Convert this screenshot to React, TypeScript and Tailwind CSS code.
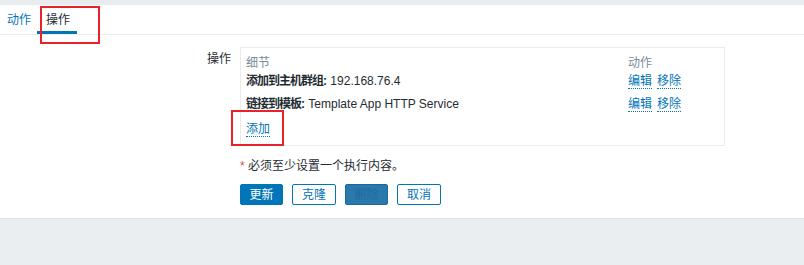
import React from 'react';

const font = "font-['Liberation_Sans','Noto_Sans_CJK_SC',sans-serif]";

const rows = [
  { label: '添加到主机群组', value: '192.168.76.4' },
  { label: '链接到模板', value: 'Template App HTTP Service' },
];

function DotLink({ children }: { children: React.ReactNode }) {
  return (
    <span className="border-b border-dotted border-[#0275b8] leading-[14px] text-[#0275b8]">{children}</span>
  );
}

export default function App() {
  return (
    <div className={`relative flex h-[265px] w-[804px] flex-col bg-[#ebeef0] text-[12px] text-[#1f2c33] ${font}`}>
      {/* top strip */}
      <div className="h-[5px] shrink-0 bg-[#e9ecef]" />

      <div className="flex h-[214px] shrink-0 flex-col border-b border-[#dfe4e7] bg-white">
        {/* tabs */}
        <div className="flex h-[30px] shrink-0 border-b border-[#ebeef0]">
          <div className="flex items-center pl-[7px] pr-[6px] text-[#0275b8]">动作</div>
          <div className="flex items-center border-b-[3px] border-[#0275b8] pl-[9px] pr-[7px] pt-[3px]">操作</div>
        </div>

        {/* form */}
        <div className="mt-[12px] flex">
          <div className="w-[231px] pt-[5px] text-right leading-[14px]">操作</div>
          <div className="ml-[9px] flex flex-col">
            <div className="w-[485px] border border-[#ebebeb] px-[5px] pb-[7px]">
              <div className="grid h-[24px] grid-cols-[382px_1fr] items-center pt-[5px] text-[#768d99]">
                <span>细节</span>
                <span>动作</span>
              </div>
              {rows.map((r, i) => (
                <div
                  key={r.label}
                  className={`grid h-[18px] grid-cols-[382px_1fr] items-center ${i === 0 ? '' : 'mt-[5px]'}`}
                >
                  <span>
                    <b className="font-bold tracking-[-1px]">{r.label}</b>
                    <b className="font-bold">:</b> {r.value}
                  </span>
                  <span className="flex gap-[5px]">
                    <DotLink>编辑</DotLink>
                    <DotLink>移除</DotLink>
                  </span>
                </div>
              ))}
              <div className="mt-[7px] flex h-[18px] items-center">
                <DotLink>添加</DotLink>
              </div>
            </div>

            <div className="mt-[13px] h-[14px] leading-[14px]">
              <span className="text-[#d64e4e]">*</span> 必须至少设置一个执行内容。
            </div>

            <div className="mt-[11px] flex gap-[9px]">
              <button className="flex h-[21px] w-[43px] items-center justify-center rounded-[2px] border border-[#0275b8] bg-[#0275b8] text-white">
                更新
              </button>
              <button className="flex h-[21px] w-[44px] items-center justify-center rounded-[2px] border border-[#0275b8] bg-white text-[#0275b8]">
                克隆
              </button>
              <button className="flex h-[21px] w-[43px] items-center justify-center rounded-[2px] border border-[#1d689a] bg-[#2a79ad] text-[#1f6aa0]">
                删除
              </button>
              <button className="flex h-[21px] w-[44px] items-center justify-center rounded-[2px] border border-[#0275b8] bg-white text-[#0275b8]">
                取消
              </button>
            </div>
          </div>
        </div>
      </div>

      {/* annotation boxes */}
      <div className="absolute left-[40px] top-[6px] h-[38px] w-[60px] border-2 border-[#e8212a]" />
      <div className="absolute left-[231px] top-[110px] h-[36px] w-[53px] border-2 border-[#e8212a]" />
    </div>
  );
}
